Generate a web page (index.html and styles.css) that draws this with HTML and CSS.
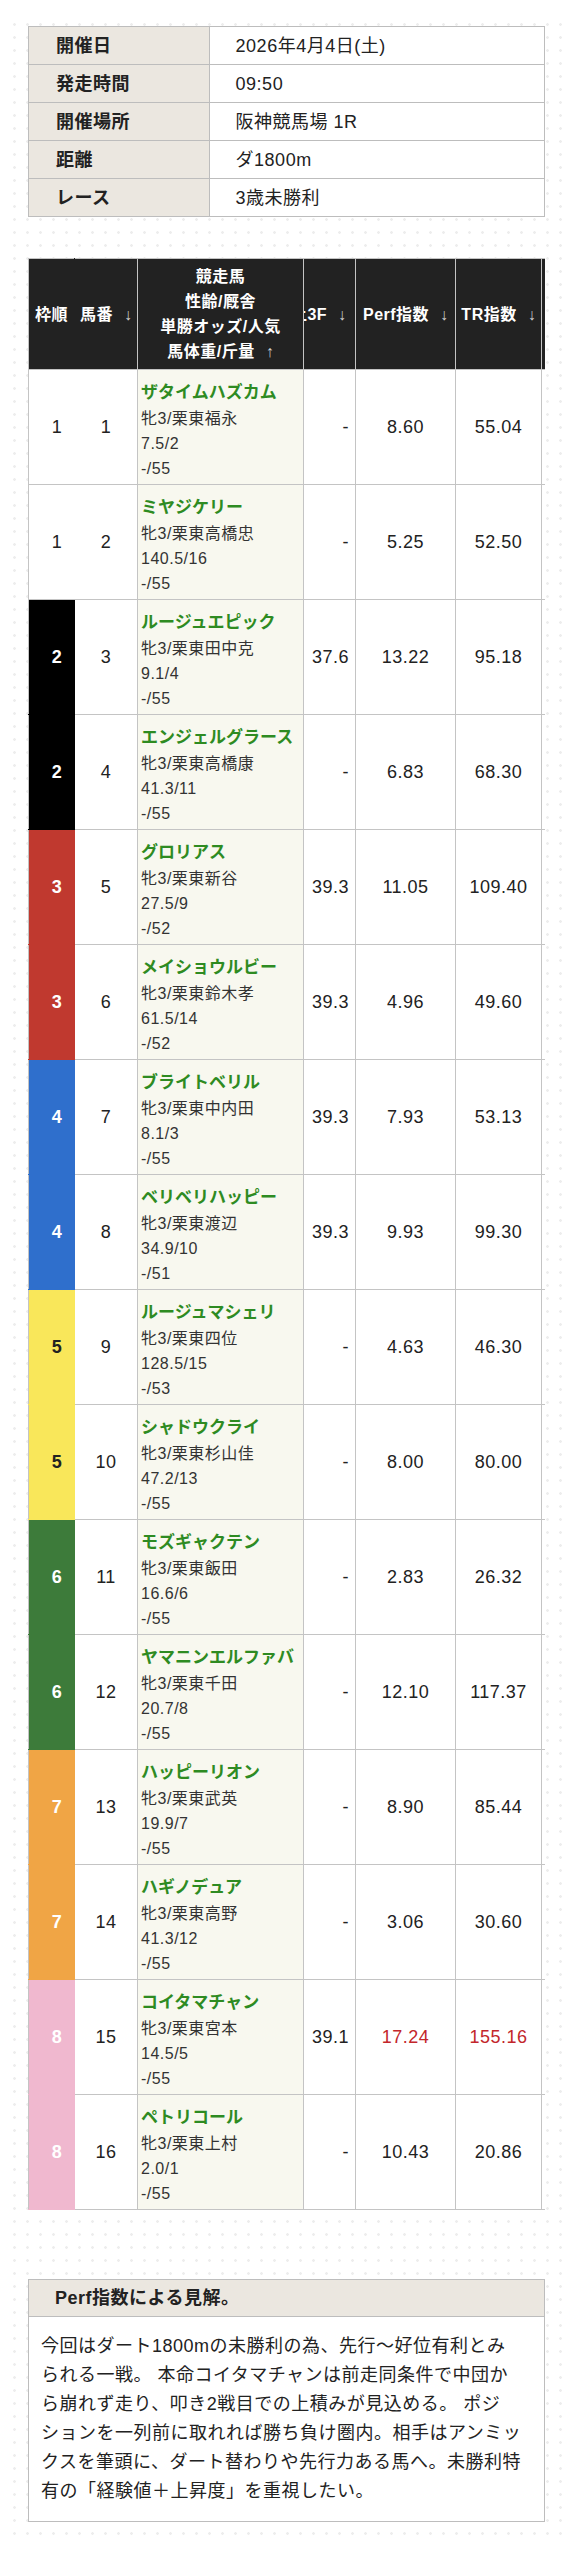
FILE: index.html
```html
<!DOCTYPE html>
<html lang="ja">
<head>
<meta charset="utf-8">
<title>阪神 1R</title>
<link rel="stylesheet" href="styles.css">
</head>
<body>
<div class="page">
  <table class="info">
    <tr><th>開催日</th><td>2026年4月4日(土)</td></tr>
    <tr><th>発走時間</th><td>09:50</td></tr>
    <tr><th>開催場所</th><td>阪神競馬場 1R</td></tr>
    <tr><th>距離</th><td>ダ1800m</td></tr>
    <tr><th>レース</th><td>3歳未勝利</td></tr>
  </table>

  <div class="scroll">
    <table class="race">
      <colgroup>
        <col class="c-frame"><col class="c-num"><col class="c-horse"><col class="c-3f"><col class="c-perf"><col class="c-tr"><col class="c-extra">
      </colgroup>
      <thead>
        <tr>
          <th class="h-frame">枠順</th>
          <th>馬番 <span class="arr">↓</span></th>
          <th>競走馬<br>性齢/厩舎<br>単勝オッズ/人気<br>馬体重/斤量 <span class="arr">↑</span></th>
          <th class="h-3f"><div class="clip">上3F <span class="arr">↓</span></div></th>
          <th>Perf指数 <span class="arr">↓</span></th>
          <th>TR指数 <span class="arr">↓</span></th>
          <th></th>
        </tr>
      </thead>
      <tbody>
        <tr><td class="frame f1">1</td><td>1</td><td class="horse"><span class="name">ザタイムハズカム</span>牝3/栗東福永<br>7.5/2<br>-/55</td><td class="f3f">-</td><td>8.60</td><td>55.04</td><td></td></tr>
        <tr><td class="frame f1">1</td><td>2</td><td class="horse"><span class="name">ミヤジケリー</span>牝3/栗東高橋忠<br>140.5/16<br>-/55</td><td class="f3f">-</td><td>5.25</td><td>52.50</td><td></td></tr>
        <tr><td class="frame f2">2</td><td>3</td><td class="horse"><span class="name">ルージュエピック</span>牝3/栗東田中克<br>9.1/4<br>-/55</td><td class="f3f">37.6</td><td>13.22</td><td>95.18</td><td></td></tr>
        <tr><td class="frame f2">2</td><td>4</td><td class="horse"><span class="name">エンジェルグラース</span>牝3/栗東高橋康<br>41.3/11<br>-/55</td><td class="f3f">-</td><td>6.83</td><td>68.30</td><td></td></tr>
        <tr><td class="frame f3">3</td><td>5</td><td class="horse"><span class="name">グロリアス</span>牝3/栗東新谷<br>27.5/9<br>-/52</td><td class="f3f">39.3</td><td>11.05</td><td>109.40</td><td></td></tr>
        <tr><td class="frame f3">3</td><td>6</td><td class="horse"><span class="name">メイショウルビー</span>牝3/栗東鈴木孝<br>61.5/14<br>-/52</td><td class="f3f">39.3</td><td>4.96</td><td>49.60</td><td></td></tr>
        <tr><td class="frame f4">4</td><td>7</td><td class="horse"><span class="name">ブライトベリル</span>牝3/栗東中内田<br>8.1/3<br>-/55</td><td class="f3f">39.3</td><td>7.93</td><td>53.13</td><td></td></tr>
        <tr><td class="frame f4">4</td><td>8</td><td class="horse"><span class="name">ベリベリハッピー</span>牝3/栗東渡辺<br>34.9/10<br>-/51</td><td class="f3f">39.3</td><td>9.93</td><td>99.30</td><td></td></tr>
        <tr><td class="frame f5">5</td><td>9</td><td class="horse"><span class="name">ルージュマシェリ</span>牝3/栗東四位<br>128.5/15<br>-/53</td><td class="f3f">-</td><td>4.63</td><td>46.30</td><td></td></tr>
        <tr><td class="frame f5">5</td><td>10</td><td class="horse"><span class="name">シャドウクライ</span>牝3/栗東杉山佳<br>47.2/13<br>-/55</td><td class="f3f">-</td><td>8.00</td><td>80.00</td><td></td></tr>
        <tr><td class="frame f6">6</td><td>11</td><td class="horse"><span class="name">モズギャクテン</span>牝3/栗東飯田<br>16.6/6<br>-/55</td><td class="f3f">-</td><td>2.83</td><td>26.32</td><td></td></tr>
        <tr><td class="frame f6">6</td><td>12</td><td class="horse"><span class="name">ヤマニンエルファバ</span>牝3/栗東千田<br>20.7/8<br>-/55</td><td class="f3f">-</td><td>12.10</td><td>117.37</td><td></td></tr>
        <tr><td class="frame f7">7</td><td>13</td><td class="horse"><span class="name">ハッピーリオン</span>牝3/栗東武英<br>19.9/7<br>-/55</td><td class="f3f">-</td><td>8.90</td><td>85.44</td><td></td></tr>
        <tr><td class="frame f7">7</td><td>14</td><td class="horse"><span class="name">ハギノデュア</span>牝3/栗東高野<br>41.3/12<br>-/55</td><td class="f3f">-</td><td>3.06</td><td>30.60</td><td></td></tr>
        <tr><td class="frame f8">8</td><td>15</td><td class="horse"><span class="name">コイタマチャン</span>牝3/栗東宮本<br>14.5/5<br>-/55</td><td class="f3f">39.1</td><td class="hot">17.24</td><td class="hot">155.16</td><td></td></tr>
        <tr><td class="frame f8">8</td><td>16</td><td class="horse"><span class="name">ペトリコール</span>牝3/栗東上村<br>2.0/1<br>-/55</td><td class="f3f">-</td><td>10.43</td><td>20.86</td><td></td></tr>
      </tbody>
    </table>
  </div>

  <section class="comment">
    <h2>Perf指数による見解。</h2>
    <p>今回はダート1800mの未勝利の為、先行〜好位有利とみ<br>られる一戦。 本命コイタマチャンは前走同条件で中団か<br>ら崩れず走り、叩き2戦目での上積みが見込める。 ポジ<br>ションを一列前に取れれば勝ち負け圏内。相手はアンミッ<br>クスを筆頭に、ダート替わりや先行力ある馬へ。未勝利特<br>有の「経験値＋上昇度」を重視したい。</p>
  </section>
</div>
</body>
</html>
```
FILE: styles.css
```css
* { box-sizing: border-box; }

body {
  margin: 0;
  background: #fff;
  color: #222;
  font-family: "Liberation Sans", "Noto Sans CJK JP", sans-serif;
  letter-spacing: 0.5px;
}

.page {
  margin: 14px 2px 0 5px;
  padding: 12px 23px 13px;
  background-image: radial-gradient(circle, #ededed 1px, transparent 1.6px);
  background-size: 13px 13px;
  background-position: 3px 4px;
}

/* race info */
.info {
  width: 100%;
  border-collapse: collapse;
  border: 1px solid #bdbdbd;
}
.info th,
.info td {
  height: 38px;
  border: 1px solid #bdbdbd;
  font-size: 18px;
  line-height: 24px;
  text-align: left;
  vertical-align: middle;
  padding: 0 26px;
}
.info th {
  width: 35%;
  background: #ebe7e0;
  font-weight: 700;
  padding-left: 27px;
}
.info td { background: #fff; font-weight: 400; }

/* entries */
.scroll {
  margin-top: 41px;
  overflow: hidden;
}
.race {
  border-collapse: collapse;
  table-layout: fixed;
  width: 593px;
}
.c-frame { width: 46px; }
.c-num { width: 63px; }
.c-horse { width: 166px; }
.c-3f { width: 52px; }
.c-perf { width: 100px; }
.c-tr { width: 86px; }
.c-extra { width: 80px; }

.race th {
  height: 110px;
  background: #222;
  color: #fff;
  font-size: 16px;
  font-weight: 700;
  line-height: 25px;
  padding: 5px 4px;
  border: 1px solid #c4c4c4;
  text-align: center;
  vertical-align: middle;
  white-space: nowrap;
  overflow: hidden;
}
.race th.h-frame { border-right-color: #222; padding: 5px 0; }
.race th.h-3f { padding: 5px 9px 5px 0; }
.clip {
  display: flex;
  justify-content: flex-end;
  overflow: hidden;
  white-space: pre;
}
.arr {
  display: inline-block;
  width: 8px;
  margin-left: 6px;
  text-align: center;
  font-weight: 400;
  color: #cfcfcf;
  letter-spacing: 0;
}

.race td {
  height: 115px;
  border: 1px solid #c4c4c4;
  background: #fff;
  font-size: 18px;
  text-align: center;
  vertical-align: middle;
  color: #222;
}
.race td.f3f { text-align: right; padding-right: 6px; }
.race td.hot { color: #c3262b; }

.race td.horse {
  vertical-align: top;
  text-align: left;
  padding: 9px 3px 0;
  background: #f8f8ef;
  font-size: 16px;
  line-height: 25px;
  color: #333;
}
.horse .name {
  display: block;
  font-size: 17px;
  font-weight: 700;
  line-height: 27px;
  letter-spacing: 0;
  color: #2e8b22;
  white-space: nowrap;
}

.race td.frame { font-weight: 700; color: #fff; padding-left: 12px; }
.race td.f1 { background: #fff; color: #222; font-weight: 400; border-right-color: #fff; }
.race td.f2 { background: #000; border-right-color: #000; border-bottom-color: #000; }
.race td.f3 { background: #c0392f; border-right-color: #c0392f; border-bottom-color: #c0392f; }
.race td.f4 { background: #2f6fcc; border-right-color: #2f6fcc; border-bottom-color: #2f6fcc; }
.race td.f5 { background: #f9e75a; color: #222; border-right-color: #f9e75a; border-bottom-color: #f9e75a; }
.race td.f6 { background: #3d7b3a; border-right-color: #3d7b3a; border-bottom-color: #3d7b3a; }
.race td.f7 { background: #f0a545; border-right-color: #f0a545; border-bottom-color: #f0a545; }
.race td.f8 { background: #f0b8cf; border-right-color: #f0b8cf; border-bottom-color: #f0b8cf; }

/* comment */
.comment {
  margin-top: 69px;
  border: 1px solid #bdbdbd;
  background: #fff;
}
.comment h2 {
  margin: 0;
  background: #ebe7e0;
  border-bottom: 1px solid #bdbdbd;
  font-size: 18px;
  font-weight: 700;
  line-height: 36px;
  padding: 0 26px;
  color: #222;
}
.comment p {
  margin: 0;
  padding: 15px 10px 15px 12px;
  font-size: 18px;
  line-height: 29px;
  color: #222;
}
```
